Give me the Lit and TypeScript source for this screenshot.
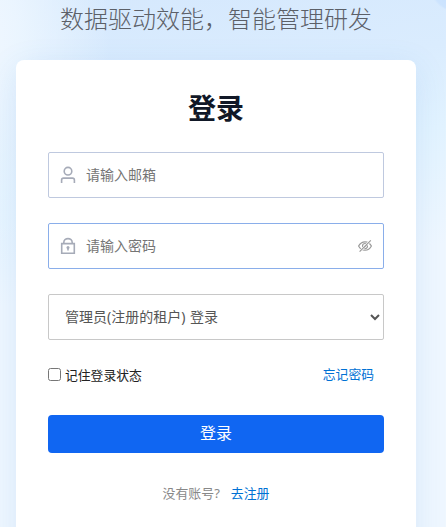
import { LitElement, html, css } from "lit";
import { customElement } from "lit/decorators.js";

@customElement("app-root")
export class AppRoot extends LitElement {
  static styles = css`
    :host {
      display: block;
      height: 527px;
      overflow: hidden;
      font-family: "Noto Sans", "Noto Sans CJK SC", sans-serif;
      background:
        radial-gradient(circle at 456px -14px, #c4defd 0, #cde4fe 24px, rgba(210, 232, 254, 0) 26px),
        radial-gradient(ellipse 140px 240px at -30px 40px, #f2f8ff 0, rgba(238, 247, 255, 0.85) 35%, rgba(226, 242, 255, 0) 100%),
        linear-gradient(172deg, #d5e8fd 0, #daecfe 18%, #e2f3ff 32%, #eff7ff 52%, #eff7ff 100%);
    }
    * { box-sizing: border-box; }
    .page { width: 400px; margin-left: 16px; }
    .slogan {
      margin: 0;
      height: 60px;
      font-size: 24px;
      line-height: 36px;
      font-weight: 300;
      font-family: "Noto Sans CJK SC", sans-serif;
      text-align: center;
      white-space: nowrap;
      color: #5c6068;
    }
    .card {
      height: 500px;
      padding: 28px 32px 0;
      border-radius: 8px;
      background: #fff;
      box-shadow: 0 8px 32px rgba(60, 130, 210, 0.13);
    }
    .title {
      margin: 0 0 24px;
      font-size: 28px;
      line-height: 40px;
      font-weight: 700;
      text-align: center;
      color: #111827;
    }
    .field {
      display: flex;
      align-items: center;
      height: 46px;
      margin-bottom: 25px;
      padding: 0 10px 0 11px;
      border: 1px solid #bfc9df;
      border-radius: 2px;
      background: #fff;
    }
    .active { border-color: #8aaeea; }
    .field svg { flex: none; }
    .input {
      flex: 1;
      min-width: 0;
      height: 44px;
      padding: 0 0 2px;
      margin-left: 10px;
      border: 0;
      outline: 0;
      background: none;
      font: 14px/20px "Noto Sans", "Noto Sans CJK SC", sans-serif;
    }
    .input::placeholder { color: #757575; }
    .select {
      display: block;
      width: 100%;
      height: 46px;
      padding: 0 0 2px 12px;
      border: 1px solid #c8c8c8;
      border-radius: 2px;
      background: #fff;
      color: #555;
      font: 14px/20px "Noto Sans", "Noto Sans CJK SC", sans-serif;
      word-spacing: 1px;
    }
    .row {
      display: flex;
      justify-content: space-between;
      height: 75px;
      padding: 24px 10px 0 0;
      font-size: 12.8px;
      line-height: 20px;
    }
    .remember { display: flex; align-items: flex-start; color: #222; }
    .check { width: 13px; height: 13px; margin: 4px 4px 0 0; }
    .remember-text { padding-top: 1px; }
    .link { color: #0071d4; text-decoration: none; }
    .submit {
      display: block;
      width: 100%;
      height: 38px;
      padding: 0 0 2px;
      border: 0;
      border-radius: 4px;
      background: #1066f2;
      color: #fff;
      font: 16px/24px "Noto Sans", "Noto Sans CJK SC", sans-serif;
    }
    .foot {
      display: flex;
      justify-content: center;
      gap: 11px;
      margin-top: 30px;
      font-size: 12.9px;
      line-height: 20px;
      color: #888;
    }
  `;

  render() {
    return html`
      <div class="page">
        <p class="slogan">数据驱动效能，智能管理研发</p>
        <main class="card">
          <h1 class="title">登录</h1>
          <div class="field">
            <svg width="16" height="18" viewBox="0 0 16 18" fill="none" stroke="#a6abb8" stroke-width="1.6">
              <circle cx="8" cy="5.2" r="3.8" />
              <path d="M1.6 17v-3q0-1.9 1.9-1.9h9q1.9 0 1.9 1.9v3" />
            </svg>
            <input class="input" type="text" placeholder="请输入邮箱" />
          </div>
          <div class="field active">
            <svg width="16" height="18" viewBox="0 0 16 18" fill="none" stroke="#a6abb8" stroke-width="1.6">
              <path d="M1.7 6.6h12.6v9.6H1.7zM3.8 6.5V5.4a4.2 3.8 0 0 1 8.4 0v1.1" />
              <circle cx="8" cy="10.4" r="1.5" fill="#a6abb8" stroke="none" />
              <path d="M8 10.5v3" />
            </svg>
            <input class="input" type="password" placeholder="请输入密码" />
            <svg width="16" height="16" viewBox="0 0 16 16" fill="none" stroke="#999" stroke-width="1.2">
              <path d="M1.6 8C3.1 5.2 5.3 3.8 8 3.8S12.9 5.2 14.4 8C12.9 10.8 10.7 12.2 8 12.2S3.1 10.8 1.6 8z" />
              <circle cx="8" cy="8" r="2.5" />
              <path d="M2.6 13.6 13.8 2.4" stroke="#fff" stroke-width="2.4" />
              <path d="M2.6 13.6 13.8 2.4M6.8 9.7 9.7 6.8" />
            </svg>
          </div>
          <select class="select"><option>管理员(注册的租户) 登录</option></select>
          <div class="row">
            <label class="remember"><input class="check" type="checkbox" /><span class="remember-text">记住登录状态</span></label>
            <a class="link" href="#">忘记密码</a>
          </div>
          <button class="submit">登录</button>
          <div class="foot"><span>没有账号?</span><a class="link" href="#">去注册</a></div>
        </main>
      </div>
    `;
  }
}
